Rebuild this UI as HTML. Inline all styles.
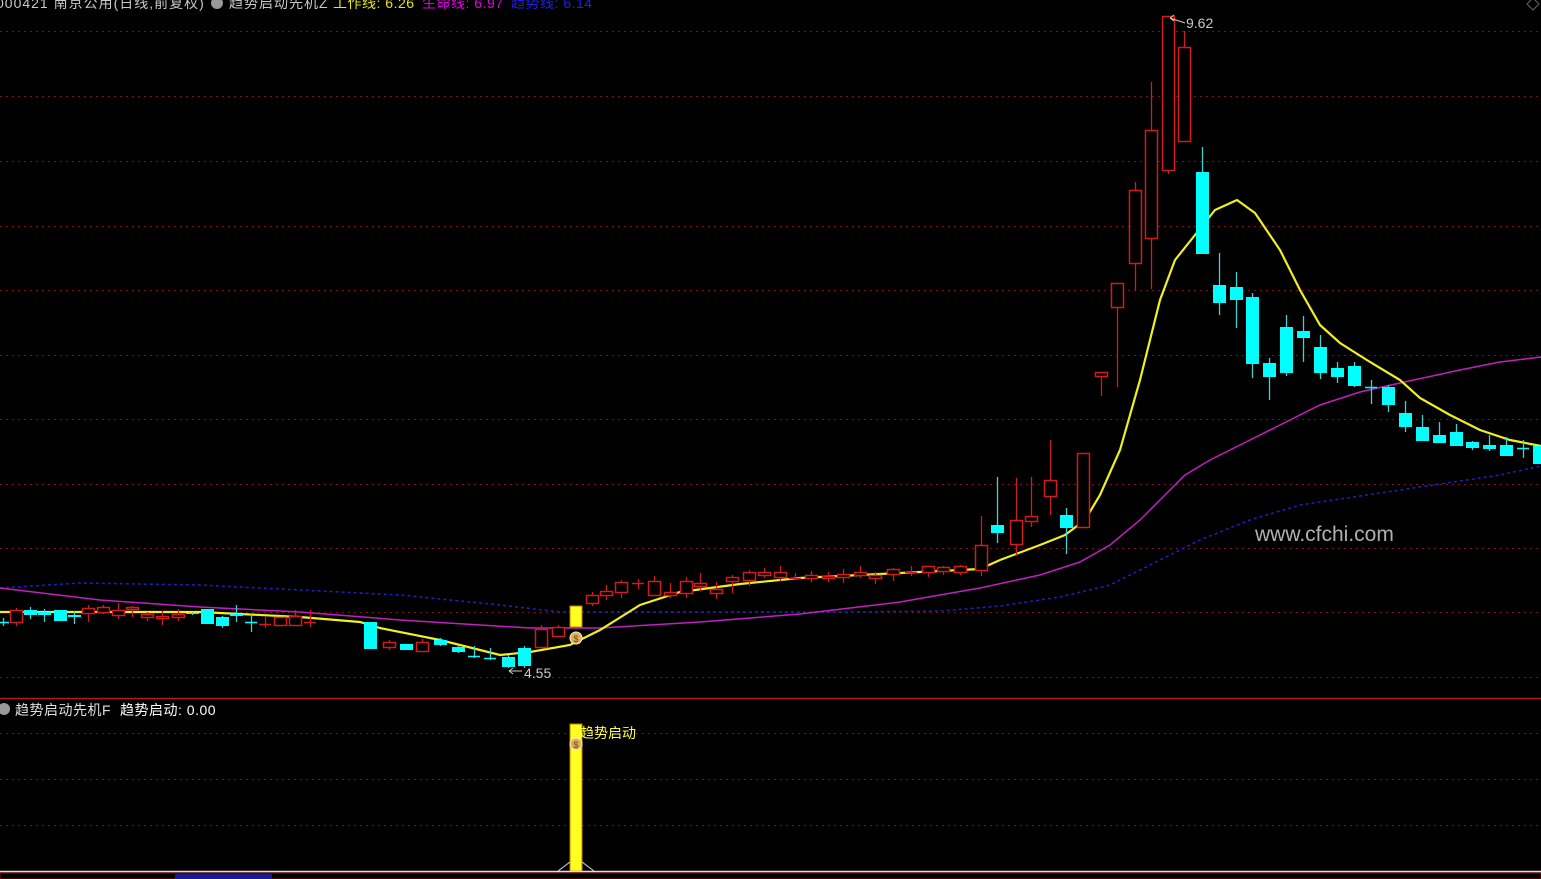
<!DOCTYPE html>
<html><head><meta charset="utf-8"><style>
html,body{margin:0;padding:0;background:#000;width:1541px;height:879px;overflow:hidden}
svg{display:block}
text{font-family:"Liberation Sans","Noto Sans CJK SC",sans-serif}
</style></head><body>
<svg id="s" width="1541" height="879" xmlns="http://www.w3.org/2000/svg">
<g id="grid" stroke="#7a1010" stroke-width="1" stroke-dasharray="2,4"></g>
<g id="lines" fill="none"></g>
<g id="c"></g>
<text x="-4" y="8" font-size="14" letter-spacing="1" fill="#c8c8c8">000421 南京公用(日线,前复权)</text>
<circle cx="217" cy="3" r="6" fill="#999"/>
<text x="229" y="8" font-size="14" letter-spacing="1" fill="#c8c8c8">趋势启动先机Z</text>
<text x="333" y="8" font-size="14" letter-spacing="0.5" fill="#e8e800">工作线: 6.26</text>
<text x="422" y="8" font-size="14" letter-spacing="0.5" fill="#e000e0">生命线: 6.97</text>
<text x="511" y="8" font-size="14" letter-spacing="0.5" fill="#2020e0">趋势线: 6.14</text>
<path d="M1527 4 L1533 -2 L1539 4 L1533 10 Z" fill="none" stroke="#666"/>
<text x="1186" y="28" font-size="14" fill="#c8c8c8">9.62</text>
<path d="M1170 18 L1185 23 M1170 18 l4 -3 M1170 18 l4 3" stroke="#ccc" fill="none"/>
<text x="524" y="678" font-size="14" fill="#c8c8c8">4.55</text>
<path d="M509 671 L522 671 M509 671 l4 -3 M509 671 l4 3" stroke="#ccc" fill="none"/>
<text x="1255" y="541" font-size="21" fill="#b0b0b0">www.cfchi.com</text>
<line x1="0" y1="698.5" x2="1541" y2="698.5" stroke="#b01818" stroke-width="1.5"/>
<circle cx="4" cy="709" r="6" fill="#999"/>
<text x="15" y="715" font-size="14" letter-spacing="0.5" fill="#e0e0e0">趋势启动先机F</text>
<text x="120" y="715" font-size="14" letter-spacing="0.5" fill="#ffffff">趋势启动: 0.00</text>
<rect x="570" y="724" width="12" height="147" fill="#ffff20" stroke="#c08000"/>
<text x="580" y="738" font-size="14" fill="#ffff40">趋势启动</text>
<circle cx="576" cy="744" r="6" fill="#d8b060" stroke="#fff3c0"/>
<text x="576" y="748" font-size="9" fill="#7a4a00" text-anchor="middle">$</text>
<line x1="0" y1="871.5" x2="1541" y2="871.5" stroke="#ddd" stroke-width="1.5"/>
<path d="M558 871 L570 862 M582 862 L594 871" stroke="#ddd" fill="none"/>
<rect x="0" y="873" width="1541" height="6" fill="#000" stroke="#8a1010"/>
<rect x="175" y="874" width="97" height="5" fill="#1a1a90"/>
<rect x="570" y="606" width="12" height="21" fill="#ffff20" stroke="#c08000"/>
<circle cx="576" cy="638" r="6" fill="#d8b060" stroke="#fff3c0"/>
<text x="576" y="642" font-size="9" fill="#7a4a00" text-anchor="middle">$</text>
</svg>
<script>
var NS="http://www.w3.org/2000/svg",g=document.getElementById('grid'),L=document.getElementById('lines'),C=document.getElementById('c');
function el(p,t,a){var e=document.createElementNS(NS,t);for(var k in a)e.setAttribute(k,a[k]);p.appendChild(e);return e}
[31,96,161,226,290,355,419,484,548,612,677,733,779,825].forEach(function(y){el(g,'line',{x1:0,x2:1541,y1:y+.5,y2:y+.5})});
function pl(pts,col,w,dash){var d=pts.map(function(p,i){return (i?'L':'M')+p[0]+' '+p[1]}).join(' ');var a={d:d,stroke:col,'stroke-width':w};if(dash)a['stroke-dasharray']=dash;el(L,'path',a)}
pl([[0,588],[80,583],[200,585],[400,595],[500,605],[560,612],[700,612],[850,612],[940,611],[1000,606],[1060,597],[1110,585],[1150,565],[1200,540],[1250,520],[1300,505],[1400,490],[1500,475],[1541,466]],'#2020c0',1.5,'3,3');
pl([[0,588],[100,600],[200,607],[300,612],[400,620],[480,625],[530,628],[600,628],[700,622],[800,614],[900,602],[980,588],[1040,575],[1080,562],[1110,545],[1140,520],[1165,495],[1185,475],[1210,460],[1240,445],[1280,425],[1320,405],[1360,392],[1400,383],[1460,370],[1500,362],[1541,357]],'#c020c0',1.5);
pl([[0,612],[100,612],[200,612],[300,617],[360,622],[380,628],[440,640],[500,655],[530,652],[570,645],[600,630],[640,605],[680,592],[740,584],[800,578],[860,575],[920,572],[980,569],[1000,560],[1040,545],[1065,535],[1085,520],[1100,495],[1120,450],[1140,380],[1160,300],[1175,260],[1195,235],[1215,210],[1237,200],[1255,213],[1280,250],[1300,290],[1320,325],[1340,343],[1370,362],[1400,380],[1420,398],[1450,415],[1480,430],[1510,440],[1541,446]],'#f0f020',2.2);
var D=[[3,622,622,618,626,0],[16,610,622,608,626,1],[30,610,615,607,619,0],[44,612,615,609,622,0],[60,610,621,610,621,0],[74,615,617,611,624,0],[88,608,613,605,622,1],[103,607,612,605,614,1],[118,610,615,603,619,1],[132,607,609,606,617,1],[147,614,617,612,621,1],[162,616,618,611,625,1],[178,614,617,609,621,1],[192,613,614,612,615,0],[207,609,624,609,624,0],[222,617,626,616,628,0],[236,614,616,605,622,0],[251,622,622,614,632,0],[265,624,624,617,628,1],[280,617,625,617,625,1],[295,616,625,610,626,1],[310,622,622,610,627,1],[370,622,649,622,649,0],[389,642,647,640,650,1],[406,644,650,644,650,0],[422,642,651,639,651,1],[440,640,645,638,646,0],[458,647,652,646,653,0],[474,656,656,646,658,0],[490,658,658,648,660,0],[508,657,667,655,668,0],[524,648,666,646,668,0],[541,629,647,625,648,1],[558,627,636,625,637,1],[592,595,603,592,606,1],[606,591,595,585,600,1],[621,582,592,580,598,1],[638,583,583,579,589,1],[654,581,595,576,596,1],[670,592,595,583,598,1],[686,581,593,577,598,1],[700,583,586,573,591,1],[716,589,593,582,599,1],[732,577,581,575,593,1],[749,572,580,570,586,1],[764,572,575,568,578,1],[780,572,577,566,581,1],[795,578,578,573,580,1],[811,575,578,571,582,1],[828,576,578,572,582,1],[843,574,577,569,583,1],[860,572,575,566,578,1],[875,575,578,572,584,1],[893,569,574,568,581,1],[911,572,572,566,576,1],[928,566,572,566,577,1],[943,567,571,566,575,1],[960,566,572,565,575,1],[981,545,570,516,576,1],[997,525,533,477,543,0],[1016,520,544,478,556,1],[1031,516,521,477,527,1],[1050,480,496,440,515,1],[1066,515,528,508,554,0],[1083,453,527,453,527,1],[1101,372,376,372,396,1],[1117,283,307,283,387,1],[1135,190,263,182,290,1],[1151,130,238,82,289,1],[1168,16,170,16,174,1],[1184,47,141,31,141,1],[1202,172,254,147,254,0],[1219,285,303,253,315,0],[1236,287,300,272,328,0],[1252,297,364,293,378,0],[1269,363,377,358,400,0],[1286,327,373,315,376,0],[1303,331,338,316,362,0],[1320,347,373,335,379,0],[1337,368,377,362,383,0],[1354,366,386,362,387,0],[1371,387,387,380,404,0],[1388,387,405,385,412,0],[1405,413,427,401,432,0],[1422,427,441,415,441,0],[1439,435,443,422,443,0],[1456,432,446,424,446,0],[1472,442,448,441,450,0],[1489,445,449,435,451,0],[1506,445,456,437,456,0],[1523,448,448,440,458,0],[1539,446,464,446,464,0]];
D.forEach(function(c){var x=c[0],up=c[5],col=up?'#d01c1c':'#00ffff';var w=12;
el(C,'line',{x1:x+.5,x2:x+.5,y1:c[3],y2:c[4],stroke:up?'#c82020':'#40d0d0','stroke-width':1.3});
if(c[2]-c[1]<1){el(C,'line',{x1:x-w/2,x2:x+w/2,y1:c[1]+.5,y2:c[1]+.5,stroke:col,'stroke-width':1.5})}
else if(up){el(C,'rect',{x:x-w/2+.5,y:c[1]+.5,width:w,height:c[2]-c[1],fill:'#000',stroke:col,'stroke-width':1.5})}
else{el(C,'rect',{x:x-w/2,y:c[1],width:w+1,height:c[2]-c[1],fill:col})}});
</script>
</body></html>
